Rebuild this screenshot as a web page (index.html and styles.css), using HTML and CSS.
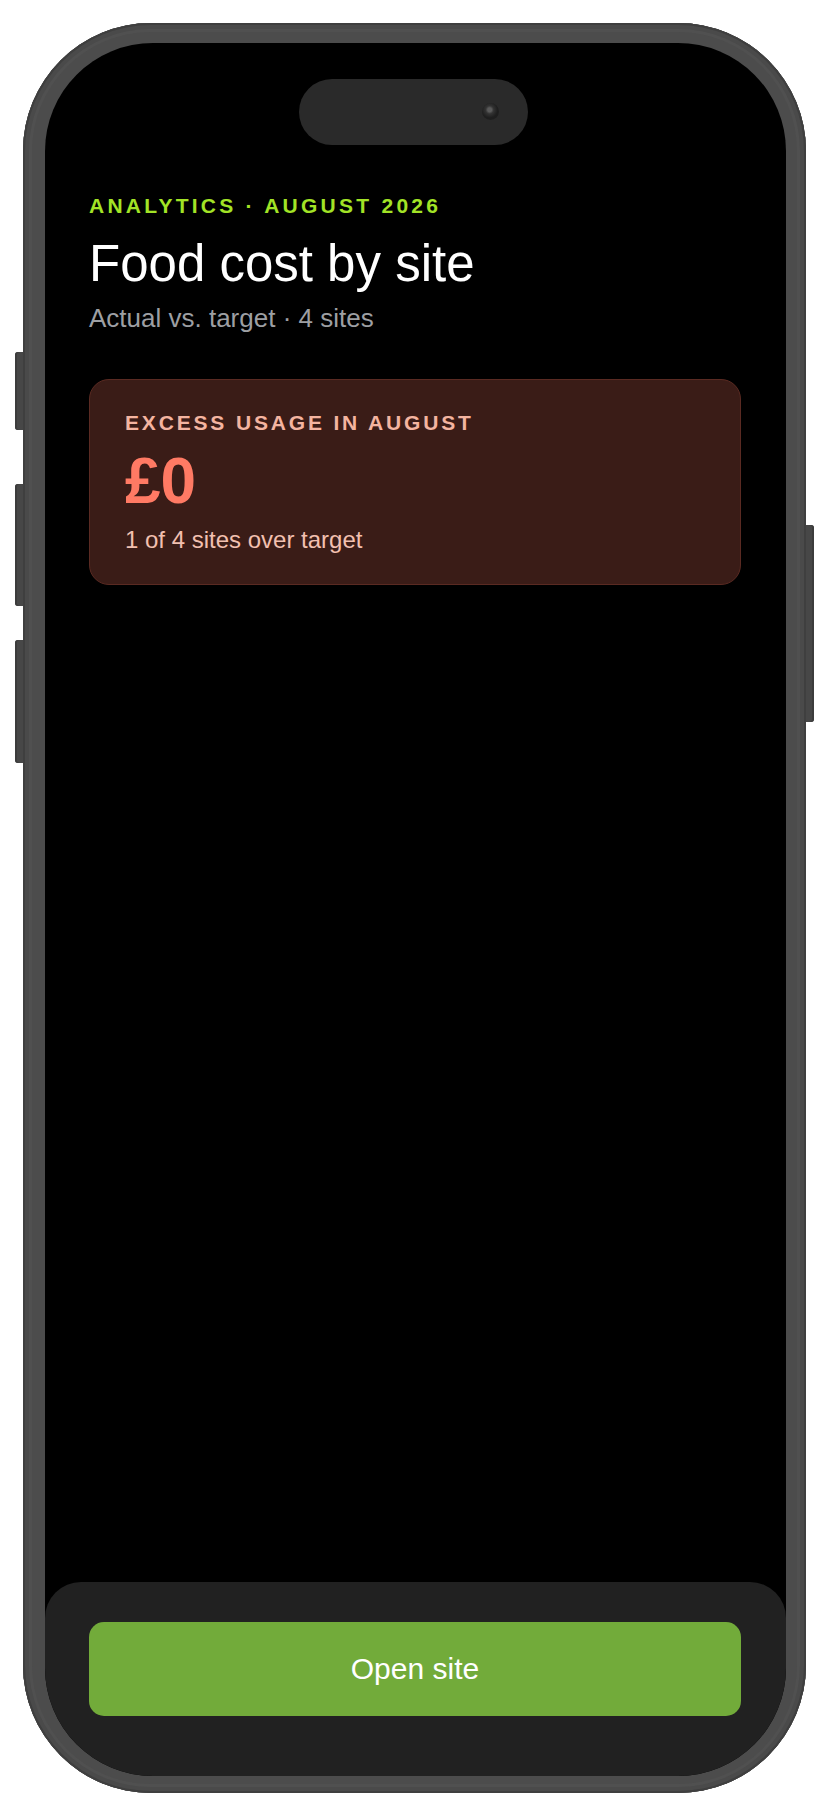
FILE: index.html
```html
<!DOCTYPE html>
<html lang="en">
<head>
<meta charset="utf-8">
<title>Food cost by site</title>
<link rel="stylesheet" href="styles.css">
</head>
<body>
<div class="phone">
  <span class="side-btn side-btn-1"></span>
  <span class="side-btn side-btn-2"></span>
  <span class="side-btn side-btn-3"></span>
  <span class="side-btn side-btn-r"></span>
  <div class="screen">
    <div class="island"><span class="camera"></span></div>
    <main class="content">
      <div class="eyebrow">ANALYTICS · AUGUST 2026</div>
      <h1 class="title">Food cost by site</h1>
      <p class="subtitle">Actual vs. target · 4 sites</p>
      <section class="card">
        <div class="card-label">EXCESS USAGE IN AUGUST</div>
        <div class="card-value">£0</div>
        <div class="card-note">1 of 4 sites over target</div>
      </section>
    </main>
    <footer class="sheet">
      <button class="cta" type="button">Open site</button>
    </footer>
  </div>
</div>
</body>
</html>
```

FILE: styles.css
```css
* { box-sizing: border-box; }

html, body {
  margin: 0;
  padding: 0;
  background: #ffffff;
}

body {
  font-family: "Liberation Sans", Arial, sans-serif;
  padding: 23px 0 0 23px;
}

.phone {
  position: relative;
  width: 783px;
  height: 1770px;
  padding: 20px 20px 17px 22px;
  border-radius: 128px;
  background: #4c4c4c;
  box-shadow: inset 0 0 0 2px #3f3f3f, inset 0 0 0 6px #4a4a4a, inset 0 0 0 9px #505050;
}

.side-btn {
  position: absolute;
  width: 8px;
  background: #474747;
  box-shadow: inset 2px 0 0 #3c3c3c;
}
.side-btn-1 { left: -8px; top: 329px; height: 78px; border-radius: 3px 0 0 3px; }
.side-btn-2 { left: -8px; top: 461px; height: 122px; border-radius: 3px 0 0 3px; }
.side-btn-3 { left: -8px; top: 617px; height: 123px; border-radius: 3px 0 0 3px; }
.side-btn-r { right: -8px; top: 502px; height: 197px; border-radius: 0 3px 3px 0; box-shadow: inset -2px 0 0 #3c3c3c; }

.screen {
  position: relative;
  height: 100%;
  display: flex;
  flex-direction: column;
  background: #000000;
  border-radius: 108px;
  overflow: hidden;
}

.island {
  position: absolute;
  top: 36px;
  left: 254px;
  width: 229px;
  height: 66px;
  border-radius: 33px;
  background: #2a2a2a;
}
.camera {
  position: absolute;
  top: 24px;
  left: 183px;
  width: 17px;
  height: 17px;
  border-radius: 50%;
  background: radial-gradient(circle at 45% 40%, #5a5a5a 0 2px, #333 4px, #1e1e1e 8px);
}

.content {
  flex: 1;
  padding: 151px 45px 0 44px;
}

.eyebrow {
  font-size: 21px;
  line-height: 24px;
  font-weight: 700;
  letter-spacing: 0.155em;
  color: #a2e326;
}

.title {
  margin: 16px 0 0;
  font-size: 51px;
  line-height: 60px;
  font-weight: 400;
  color: #ffffff;
}

.subtitle {
  margin: 7px 0 0;
  font-size: 26px;
  line-height: 34px;
  color: #9d9fa3;
}

.card {
  margin-top: 44px;
  padding: 31px 34px 29px 35px;
  border: 1px solid #5a2a22;
  border-radius: 20px;
  background: #3a1c17;
}

.card-label {
  font-size: 21px;
  line-height: 24px;
  font-weight: 700;
  letter-spacing: 0.135em;
  color: #f4b4a0;
}

.card-value {
  margin-top: 14px;
  font-size: 64px;
  line-height: 64px;
  font-weight: 700;
  color: #ff7a64;
}

.card-note {
  margin-top: 11px;
  font-size: 24px;
  line-height: 31px;
  color: #f2c0b0;
}

.sheet {
  height: 194px;
  padding: 40px 45px 0 44px;
  background: #212121;
  border-radius: 36px 36px 0 0;
}

.cta {
  display: block;
  width: 100%;
  height: 94px;
  border: 0;
  border-radius: 15px;
  background: #72ab3a;
  color: #ffffff;
  font-family: "Liberation Sans", Arial, sans-serif;
  font-size: 30px;
  cursor: pointer;
}
```
